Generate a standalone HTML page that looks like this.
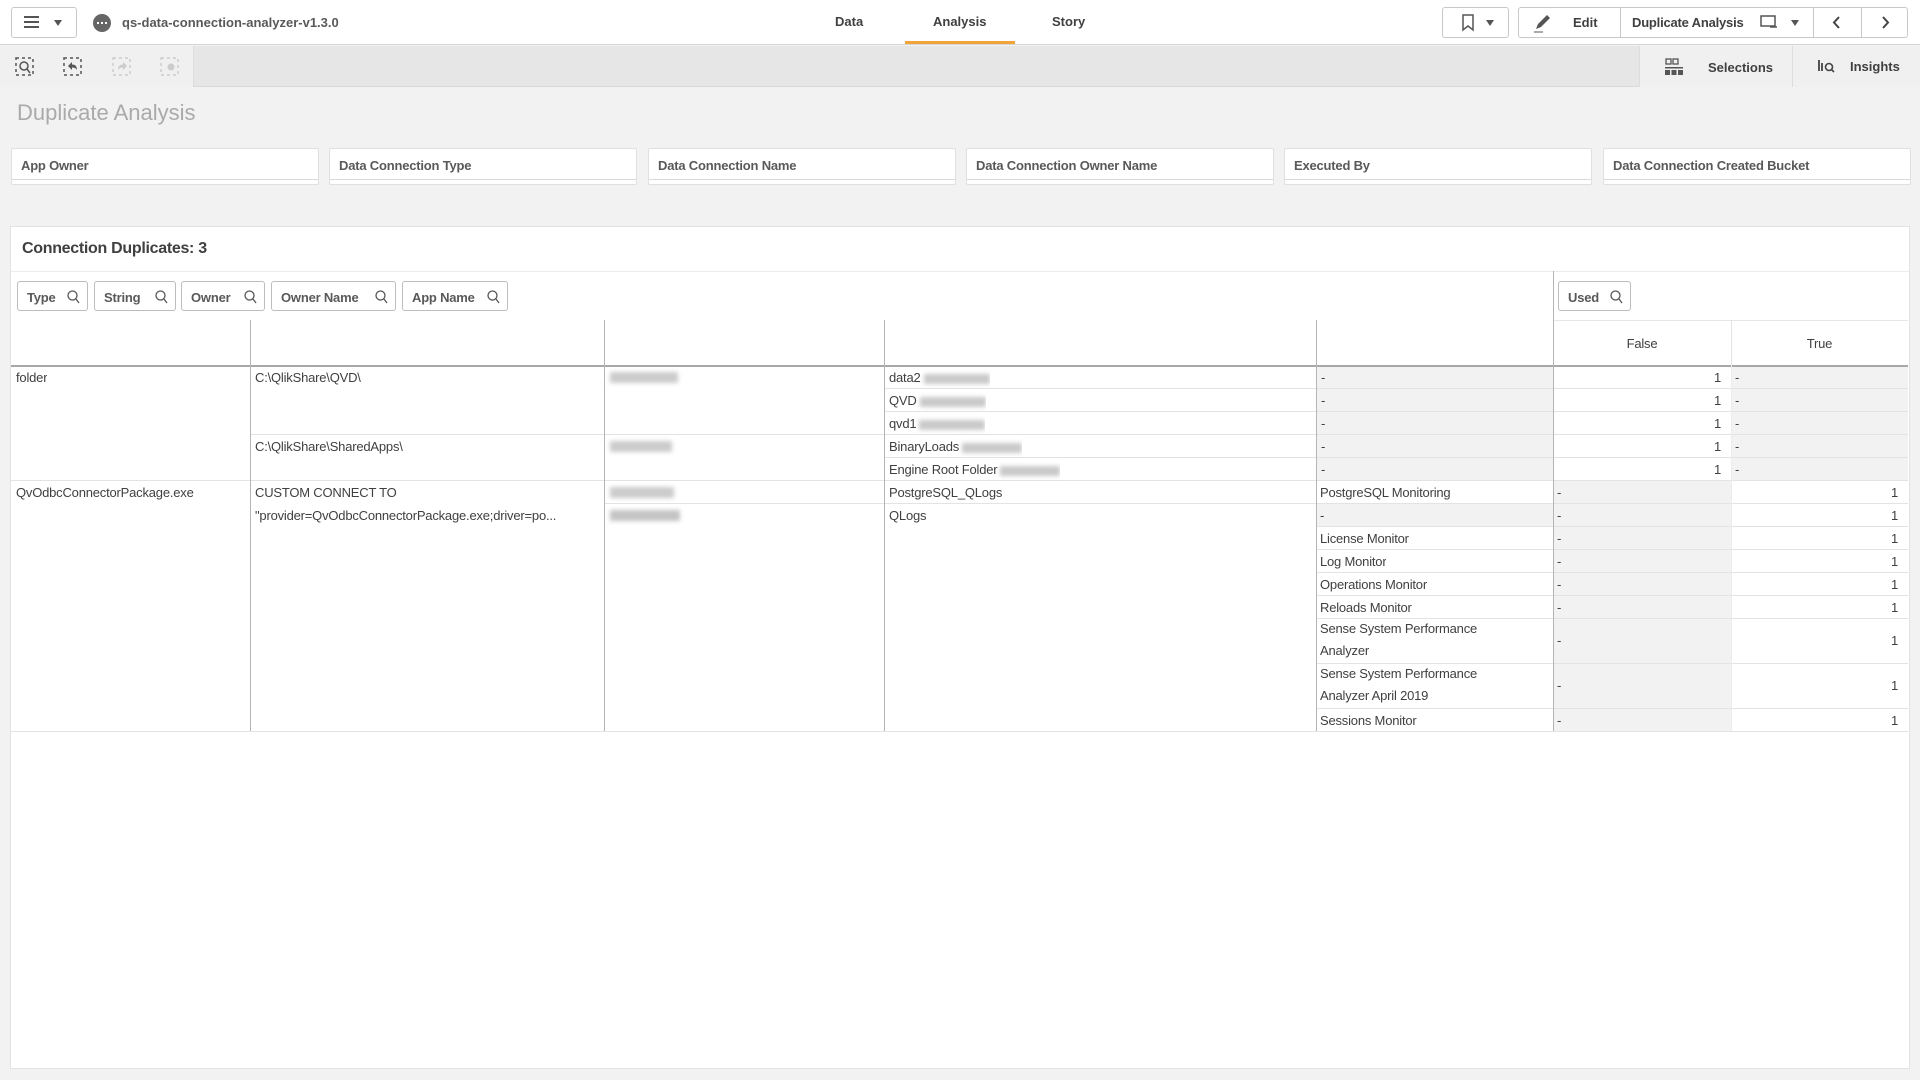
<!DOCTYPE html>
<html><head><meta charset="utf-8"><style>
*{box-sizing:border-box;margin:0;padding:0}
body{width:1920px;height:1080px;background:#f2f2f2;font-family:"Liberation Sans",sans-serif;color:#404040;position:relative;overflow:hidden;font-size:13px}
.a{position:absolute}
.btn{position:absolute;border:1px solid #c8c8c8;border-radius:3px;background:#fff}
.b{font-weight:bold;color:#595959}
.fb{position:absolute;top:148px;height:37px;width:308px;background:#fff;border:1px solid #e0e0e0;border-radius:2px}
.fb span{position:absolute;left:9px;top:9px;font-weight:bold;font-size:13px;color:#595959;letter-spacing:-0.2px}
.fb i{position:absolute;left:0;right:0;top:30px;border-top:1px solid #d9d9d9}
.sb{position:absolute;top:281px;height:30px;border:1px solid #bdbdbd;border-radius:3px;background:#fff;font-weight:bold;font-size:13px;color:#595959;padding:8px 0 0 9px;letter-spacing:-0.2px}
.sb svg{position:absolute;right:7px;top:8px}
.c{position:absolute;font-size:13px;line-height:23px;white-space:nowrap;overflow:hidden;letter-spacing:-0.2px}
.g{background:#f2f2f2}
.hl{position:absolute;height:1px;background:#e3e3e3}
.vl{position:absolute;width:1px;background:#b5b5b5}
.blur{display:inline-block;height:10px;background:#c9c9c9;filter:blur(2px);vertical-align:middle;margin-left:3px}
</style></head><body>
<div class="a" style="left:0;top:0;width:1920px;height:45px;background:#fff;border-bottom:1px solid #d5d5d5"></div>
<div class="btn" style="left:11px;top:7px;width:66px;height:31px"></div>
<div class="a" style="left:24px;top:16px;width:15px;height:2px;background:#555;box-shadow:0 5px 0 #555,0 10px 0 #555"></div>
<div class="a" style="left:54px;top:20px;width:0;height:0;border-left:4px solid transparent;border-right:4px solid transparent;border-top:6px solid #555"></div>
<div class="a" style="left:93px;top:14px;width:18px;height:18px;border-radius:50%;background:#666"></div>
<div class="a" style="left:97px;top:22px;width:2px;height:2px;background:#fff;box-shadow:4px 0 0 #fff,8px 0 0 #fff"></div>
<div class="a b" style="left:122px;top:15px;font-size:13px">qs-data-connection-analyzer-v1.3.0</div>
<div class="a b" style="left:835px;top:14px;font-size:13px;color:#404040">Data</div>
<div class="a b" style="left:933px;top:14px;font-size:13px;color:#404040">Analysis</div>
<div class="a" style="left:905px;top:41px;width:110px;height:3px;background:#f0a43a"></div>
<div class="a b" style="left:1052px;top:14px;font-size:13px;color:#404040">Story</div>
<div class="btn" style="left:1442px;top:7px;width:67px;height:31px"></div>
<svg class="a" style="left:1462px;top:14px" width="12" height="18"><path d="M1 1H11V16L6 12L1 16Z" fill="none" stroke="#555" stroke-width="1.5"/></svg>
<div class="a" style="left:1486px;top:20px;border-left:4px solid transparent;border-right:4px solid transparent;border-top:6px solid #555"></div>
<div class="btn" style="left:1518px;top:7px;width:390px;height:31px"></div>
<div class="a" style="left:1620px;top:8px;width:1px;height:29px;background:#c8c8c8"></div>
<div class="a" style="left:1813px;top:8px;width:1px;height:29px;background:#c8c8c8"></div>
<div class="a" style="left:1861px;top:8px;width:1px;height:29px;background:#c8c8c8"></div>
<svg class="a" style="left:1533px;top:13px" width="20" height="20"><path d="M3 16L5 11L14 2L17 5L8 14Z" fill="#555"/><path d="M1 19H10" stroke="#555"/></svg>
<div class="a b" style="left:1573px;top:15px;color:#404040">Edit</div>
<div class="a b" style="left:1632px;top:15px;color:#404040;letter-spacing:-0.2px">Duplicate Analysis</div>
<svg class="a" style="left:1760px;top:15px" width="18" height="14"><rect x="1" y="1" width="14" height="10" fill="none" stroke="#555" stroke-width="1.5"/><path d="M10 12H17" stroke="#555" stroke-width="1.5"/></svg>
<div class="a" style="left:1791px;top:20px;border-left:4px solid transparent;border-right:4px solid transparent;border-top:6px solid #555"></div>
<svg class="a" style="left:1832px;top:15px" width="10" height="15"><path d="M7 2L2 7.5L7 13" fill="none" stroke="#444" stroke-width="2"/></svg>
<svg class="a" style="left:1880px;top:15px" width="10" height="15"><path d="M3 2L8 7.5L3 13" fill="none" stroke="#444" stroke-width="2"/></svg>
<div class="a" style="left:0;top:46px;width:1920px;height:41px;background:#e6e6e6;border-bottom:1px solid #d9d9d9"></div>
<div class="a" style="left:0;top:46px;width:194px;height:41px;background:#f0f0f0;border-right:1px solid #ddd"></div>
<div class="a" style="left:1639px;top:46px;width:281px;height:41px;background:#f0f0f0;border-left:1px solid #ddd"></div>
<div class="a" style="left:1792px;top:46px;width:1px;height:41px;background:#ddd"></div>
<svg class="a" style="left:15px;top:57px" width="20" height="20"><rect x="1" y="1" width="17" height="17" fill="none" stroke="#555" stroke-width="1.5" stroke-dasharray="3 3"/><circle cx="9" cy="9" r="4" fill="none" stroke="#555" stroke-width="1.5"/><path d="M12 12L15 16" stroke="#555" stroke-width="1.5"/></svg>
<svg class="a" style="left:63px;top:57px" width="20" height="20"><rect x="1" y="1" width="17" height="17" fill="none" stroke="#555" stroke-width="1.5" stroke-dasharray="3 3"/><path d="M5 9L9 5V7.5C12 7.5 14 9 14 13C13 11 11 10.5 9 10.5V13Z" fill="#555"/></svg>
<svg class="a" style="left:112px;top:57px" width="20" height="20"><rect x="1" y="1" width="17" height="17" fill="none" stroke="#ccc" stroke-width="1.5" stroke-dasharray="3 3"/><path d="M15 9L11 5V7.5C8 7.5 6 9 6 13C7 11 9 10.5 11 10.5V13Z" fill="#ccc"/></svg>
<svg class="a" style="left:160px;top:57px" width="20" height="20"><rect x="1" y="1" width="17" height="17" fill="none" stroke="#ccc" stroke-width="1.5" stroke-dasharray="3 3"/><circle cx="11" cy="10" r="3.5" fill="#ccc"/></svg>
<svg class="a" style="left:1665px;top:58px" width="18" height="18"><rect x="1" y="1" width="5" height="5" fill="none" stroke="#555" stroke-width="1.3"/><rect x="8" y="1" width="5" height="5" fill="none" stroke="#555" stroke-width="1.3"/><rect x="0" y="9" width="18" height="1.5" fill="#555"/><rect x="0" y="12" width="5" height="5" fill="#555"/><rect x="6.5" y="12" width="5" height="5" fill="#555"/><rect x="13" y="12" width="5" height="5" fill="#555"/></svg>
<div class="a b" style="left:1708px;top:60px;color:#404040">Selections</div>
<svg class="a" style="left:1818px;top:58px" width="20" height="16"><path d="M1 2V13M4 5V13" stroke="#444" stroke-width="1.8"/><circle cx="11" cy="9" r="3.5" fill="none" stroke="#444" stroke-width="1.6"/><path d="M13.5 11.5L16 14" stroke="#444" stroke-width="1.6"/></svg>
<div class="a b" style="left:1850px;top:59px;color:#404040">Insights</div>
<div class="a" style="left:17px;top:100px;font-size:22px;color:#aaa">Duplicate Analysis</div>
<div class="fb" style="left:11px"><span>App Owner</span><i></i></div>
<div class="fb" style="left:329px"><span>Data Connection Type</span><i></i></div>
<div class="fb" style="left:648px"><span>Data Connection Name</span><i></i></div>
<div class="fb" style="left:966px"><span>Data Connection Owner Name</span><i></i></div>
<div class="fb" style="left:1284px"><span>Executed By</span><i></i></div>
<div class="fb" style="left:1603px"><span>Data Connection Created Bucket</span><i></i></div>
<div class="a" style="left:10px;top:226px;width:1900px;height:843px;background:#fff;border:1px solid #e3e3e3"></div>
<div class="a" style="left:22px;top:240px;font-size:16px;font-weight:bold;color:#404040;letter-spacing:-0.3px">Connection Duplicates: 3</div>
<div class="hl" style="left:11px;top:271px;width:1898px;background:#ececec"></div>
<div class="sb" style="left:17px;width:71px">Type<svg width="13" height="14"><circle cx="5.5" cy="5.5" r="4.5" fill="none" stroke="#555" stroke-width="1.3"/><path d="M9 9L12 13" stroke="#555" stroke-width="1.3"/></svg></div>
<div class="sb" style="left:94px;width:82px">String<svg width="13" height="14"><circle cx="5.5" cy="5.5" r="4.5" fill="none" stroke="#555" stroke-width="1.3"/><path d="M9 9L12 13" stroke="#555" stroke-width="1.3"/></svg></div>
<div class="sb" style="left:181px;width:84px">Owner<svg width="13" height="14"><circle cx="5.5" cy="5.5" r="4.5" fill="none" stroke="#555" stroke-width="1.3"/><path d="M9 9L12 13" stroke="#555" stroke-width="1.3"/></svg></div>
<div class="sb" style="left:271px;width:125px">Owner Name<svg width="13" height="14"><circle cx="5.5" cy="5.5" r="4.5" fill="none" stroke="#555" stroke-width="1.3"/><path d="M9 9L12 13" stroke="#555" stroke-width="1.3"/></svg></div>
<div class="sb" style="left:402px;width:106px">App Name<svg width="13" height="14"><circle cx="5.5" cy="5.5" r="4.5" fill="none" stroke="#555" stroke-width="1.3"/><path d="M9 9L12 13" stroke="#555" stroke-width="1.3"/></svg></div>
<div class="sb" style="left:1558px;width:73px">Used<svg width="13" height="14"><circle cx="5.5" cy="5.5" r="4.5" fill="none" stroke="#555" stroke-width="1.3"/><path d="M9 9L12 13" stroke="#555" stroke-width="1.3"/></svg></div>
<div class="hl" style="left:1553px;top:320px;width:355px;background:#e6e6e6"></div>
<div class="c" style="left:1553px;top:332px;width:178px;text-align:center">False</div>
<div class="c" style="left:1731px;top:332px;width:177px;text-align:center">True</div>
<div class="vl" style="left:1731px;top:320px;height:45px;background:#e3e3e3"></div>
<div class="a g" style="left:1317px;top:366px;width:236px;height:114px"></div>
<div class="a g" style="left:1731px;top:366px;width:177px;height:114px"></div>
<div class="a g" style="left:1317px;top:503px;width:236px;height:23px"></div>
<div class="a g" style="left:1554px;top:480px;width:177px;height:251px"></div>
<div class="hl" style="left:11px;top:365px;width:1897px;height:2px;background:#a8a8a8"></div>
<div class="hl" style="left:885px;top:388px;width:1023px"></div>
<div class="hl" style="left:885px;top:411px;width:1023px"></div>
<div class="hl" style="left:250px;top:434px;width:1658px"></div>
<div class="hl" style="left:885px;top:457px;width:1023px"></div>
<div class="hl" style="left:11px;top:480px;width:1897px"></div>
<div class="hl" style="left:604px;top:503px;width:1304px"></div>
<div class="hl" style="left:1316px;top:526px;width:592px"></div>
<div class="hl" style="left:1316px;top:549px;width:592px"></div>
<div class="hl" style="left:1316px;top:572px;width:592px"></div>
<div class="hl" style="left:1316px;top:595px;width:592px"></div>
<div class="hl" style="left:1316px;top:618px;width:592px"></div>
<div class="hl" style="left:1316px;top:663px;width:592px"></div>
<div class="hl" style="left:1316px;top:708px;width:592px"></div>
<div class="hl" style="left:11px;top:731px;width:1897px"></div>
<div class="vl" style="left:250px;top:320px;height:411px"></div>
<div class="vl" style="left:604px;top:320px;height:411px"></div>
<div class="vl" style="left:884px;top:320px;height:411px"></div>
<div class="vl" style="left:1316px;top:320px;height:411px"></div>
<div class="vl" style="left:1553px;top:271px;height:460px"></div>
<div class="vl" style="left:1731px;top:365px;height:366px;background:#ececec"></div>
<div class="c" style="left:16px;top:366px">folder</div>
<div class="c" style="left:16px;top:481px">QvOdbcConnectorPackage.exe</div>
<div class="c" style="left:255px;top:366px">C:\QlikShare\QVD\</div>
<div class="c" style="left:255px;top:435px">C:\QlikShare\SharedApps\</div>
<div class="c" style="left:255px;top:481px">CUSTOM CONNECT TO</div>
<div class="c" style="left:255px;top:504px;width:345px">"provider=QvOdbcConnectorPackage.exe;driver=po...</div>
<div class="a" style="left:610px;top:372px;width:68px;height:11px;background:#ccc;filter:blur(2px)"></div>
<div class="a" style="left:610px;top:441px;width:62px;height:11px;background:#ccc;filter:blur(2px)"></div>
<div class="a" style="left:610px;top:487px;width:64px;height:11px;background:#ccc;filter:blur(2px)"></div>
<div class="a" style="left:610px;top:510px;width:70px;height:11px;background:#c4c4c4;filter:blur(2px)"></div>
<div class="c" style="left:889px;top:366px">data2<span class="blur" style="width:66px"></span></div>
<div class="c" style="left:889px;top:389px">QVD<span class="blur" style="width:66px"></span></div>
<div class="c" style="left:889px;top:412px">qvd1<span class="blur" style="width:66px"></span></div>
<div class="c" style="left:889px;top:435px">BinaryLoads<span class="blur" style="width:60px"></span></div>
<div class="c" style="left:889px;top:458px">Engine Root Folder<span class="blur" style="width:60px"></span></div>
<div class="c" style="left:889px;top:481px">PostgreSQL_QLogs</div>
<div class="c" style="left:889px;top:504px">QLogs</div>
<div class="c" style="left:1321px;top:366px">-</div>
<div class="c" style="left:1321px;top:389px">-</div>
<div class="c" style="left:1321px;top:412px">-</div>
<div class="c" style="left:1321px;top:435px">-</div>
<div class="c" style="left:1321px;top:458px">-</div>
<div class="c" style="left:1320px;top:481px">PostgreSQL Monitoring</div>
<div class="c" style="left:1320px;top:504px">-</div>
<div class="c" style="left:1320px;top:527px">License Monitor</div>
<div class="c" style="left:1320px;top:550px">Log Monitor</div>
<div class="c" style="left:1320px;top:573px">Operations Monitor</div>
<div class="c" style="left:1320px;top:596px">Reloads Monitor</div>
<div class="c" style="left:1320px;top:618px;line-height:22px">Sense System Performance<br>Analyzer</div>
<div class="c" style="left:1320px;top:663px;line-height:22px">Sense System Performance<br>Analyzer April 2019</div>
<div class="c" style="left:1320px;top:709px">Sessions Monitor</div>
<div class="c" style="left:1554px;top:366px;width:167px;text-align:right;line-height:23px">1<br>1<br>1<br>1<br>1</div>
<div class="c" style="left:1735px;top:366px;line-height:23px">-<br>-<br>-<br>-<br>-</div>
<div class="c" style="left:1557px;top:481px;line-height:23px">-<br>-<br>-<br>-<br>-<br>-</div>
<div class="c" style="left:1557px;top:629px">-</div>
<div class="c" style="left:1557px;top:674px">-</div>
<div class="c" style="left:1557px;top:709px">-</div>
<div class="c" style="left:1732px;top:481px;width:166px;text-align:right;line-height:23px">1<br>1<br>1<br>1<br>1<br>1</div>
<div class="c" style="left:1732px;top:629px;width:166px;text-align:right">1</div>
<div class="c" style="left:1732px;top:674px;width:166px;text-align:right">1</div>
<div class="c" style="left:1732px;top:709px;width:166px;text-align:right">1</div>
</body></html>
